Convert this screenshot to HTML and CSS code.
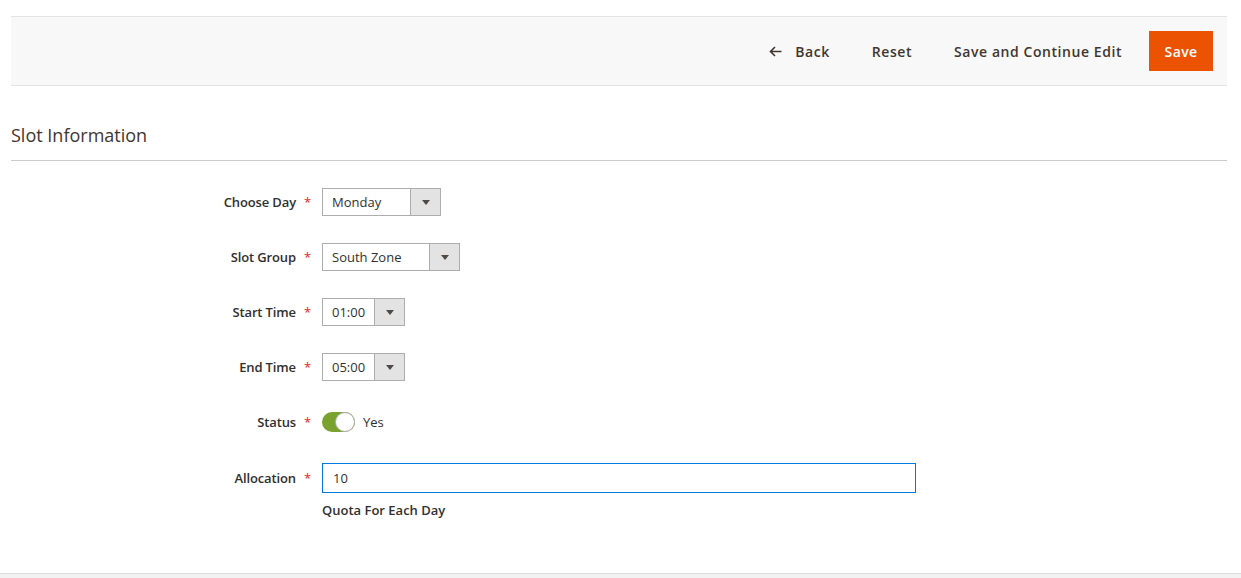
FILE: index.html
```html
<!DOCTYPE html>
<html>
<head>
<meta charset="utf-8">
<link rel="stylesheet" href="styles.css">
</head>
<body>
<div class="page">
  <div class="actions-bar">
    <button class="btn-text back"><svg class="arrow" width="13" height="11" viewBox="0 0 13 11"><path d="M12.5 5.5H1.8M6 1L1.5 5.5 6 10" fill="none" stroke="#41362f" stroke-width="1.6"/></svg><span>Back</span></button>
    <button class="btn-text">Reset</button>
    <button class="btn-text">Save and Continue Edit</button>
    <button class="btn-primary">Save</button>
  </div>

  <h2 class="section-title">Slot Information</h2>

  <form class="form">
    <div class="field">
      <label class="label">Choose Day<span class="req">*</span></label>
      <div class="select w-day"><span class="val">Monday</span><span class="caret"></span></div>
    </div>
    <div class="field">
      <label class="label">Slot Group<span class="req">*</span></label>
      <div class="select w-group"><span class="val">South Zone</span><span class="caret"></span></div>
    </div>
    <div class="field">
      <label class="label">Start Time<span class="req">*</span></label>
      <div class="select w-time"><span class="val">01:00</span><span class="caret"></span></div>
    </div>
    <div class="field">
      <label class="label">End Time<span class="req">*</span></label>
      <div class="select w-time"><span class="val">05:00</span><span class="caret"></span></div>
    </div>
    <div class="field">
      <label class="label">Status<span class="req">*</span></label>
      <div class="switch"><span class="track"><span class="knob"></span></span><span class="switch-text">Yes</span></div>
    </div>
    <div class="field field-input">
      <label class="label">Allocation<span class="req">*</span></label>
      <div class="control">
        <div class="input">10</div>
        <div class="note">Quota For Each Day</div>
      </div>
    </div>
  </form>
</div>
<div class="footer"></div>
</body>
</html>
```

FILE: styles.css
```css
* { box-sizing: border-box; }
html, body { margin: 0; padding: 0; background: #fff; }
body {
  font-family: "Open Sans", "Liberation Sans", sans-serif;
  color: #303030;
  height: 578px;
  overflow: hidden;
}
.page {
  padding: 16px 14px 0 11px;
  height: 573px;
}
.actions-bar {
  height: 70px;
  background: #f8f8f8;
  border-top: 1px solid #e3e3e3;
  border-bottom: 1px solid #e3e3e3;
  display: flex;
  align-items: center;
  justify-content: flex-end;
  padding-right: 14px;
}
.actions-bar button {
  font-family: "Open Sans", "Liberation Sans", sans-serif;
  font-size: 14px;
  font-weight: 560;
  letter-spacing: 0.04em;
  height: 40px;
  padding: 0 15px;
  margin-left: 12px;
  border: 0;
  background: transparent;
  color: #41362f;
  display: flex;
  align-items: center;
  cursor: pointer;
}
.back .arrow { margin-right: 13px; }
.btn-primary {
  background: #eb5202 !important;
  color: #fff !important;
  padding: 0 !important;
  width: 64px;
  justify-content: center;
  font-weight: 600 !important;
  letter-spacing: 0.025em !important;
}
.section-title {
  margin: 37px 0 0 0;
  font-size: 18px;
  font-weight: 400;
  color: #41362f;
  line-height: 24px;
  padding-bottom: 13px;
  border-bottom: 1px solid #ccc;
}
.form {
  padding-top: 27px;
}
.field {
  display: flex;
  align-items: center;
  height: 28px;
  margin-bottom: 27px;
}
.field-input { align-items: flex-start; height: auto; }
.label {
  width: 311px;
  text-align: right;
  padding-right: 11px;
  font-size: 13px;
  font-weight: 560;
  letter-spacing: -0.01em;
  color: #303030;
}
.field-input .label { line-height: 30px; }
.req {
  color: #e22626;
  margin-left: 8px;
  font-weight: 400;
}
.select {
  height: 28px;
  border: 1px solid #adadad;
  background: #fff;
  display: flex;
  align-items: stretch;
  font-size: 13px;
  color: #303030;
}
.select .val {
  flex: 1;
  padding-left: 9px;
  line-height: 26px;
}
.select .caret {
  width: 30px;
  background: #e3e3e3;
  border-left: 1px solid #adadad;
  position: relative;
}
.select .caret::after {
  content: "";
  position: absolute;
  left: 11px;
  top: 11px;
  border-left: 4px solid transparent;
  border-right: 4px solid transparent;
  border-top: 5px solid #514943;
}
.w-day { width: 119px; }
.w-group { width: 138px; }
.w-time { width: 83px; }
.switch {
  display: flex;
  align-items: center;
}
.track {
  width: 33px;
  height: 20px;
  border-radius: 10px;
  background: #79a22e;
  position: relative;
  display: block;
}
.knob {
  position: absolute;
  right: 0;
  top: 0;
  width: 20px;
  height: 20px;
  border-radius: 50%;
  background: #fff;
  border: 1px solid #adadad;
}
.switch-text {
  margin-left: 8px;
  font-size: 13px;
  color: #303030;
}
.input {
  width: 594px;
  height: 30px;
  border: 1px solid #007bdb;
  font-size: 13px;
  line-height: 28px;
  padding-left: 10px;
  color: #303030;
}
.note {
  margin-top: 8px;
  font-size: 13px;
  font-weight: 600;
  color: #303030;
}
.footer {
  height: 5px;
  background: #f2f2f2;
  border-top: 1px solid #ddd;
}
```
